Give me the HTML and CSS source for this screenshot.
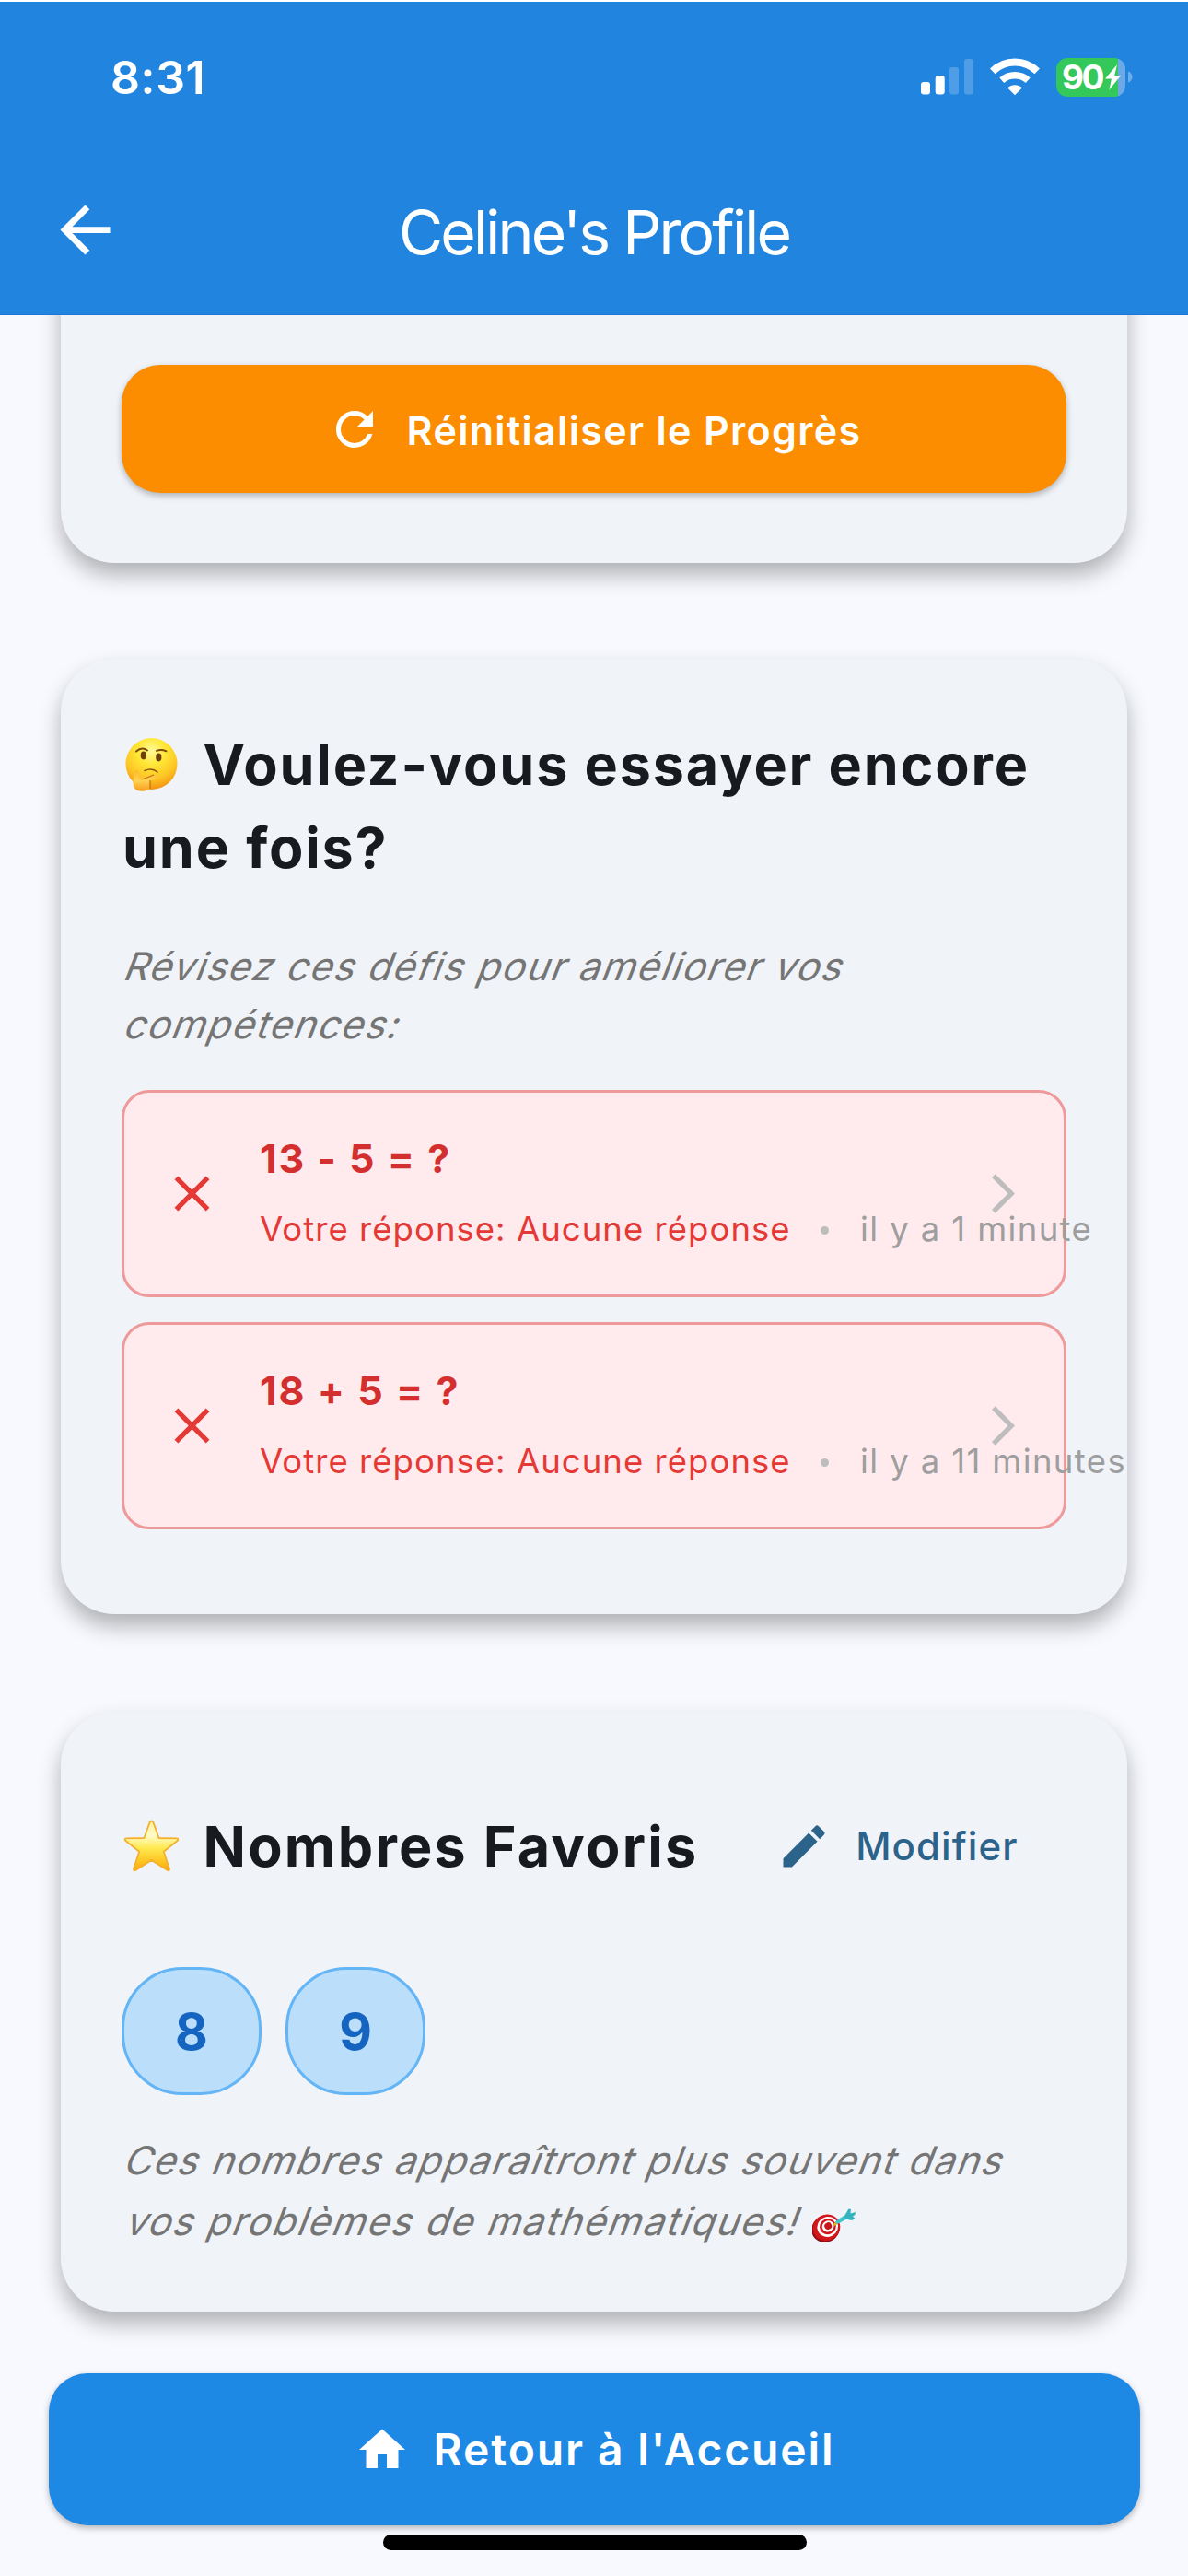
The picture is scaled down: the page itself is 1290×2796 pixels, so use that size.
FILE: index.html
```
<!DOCTYPE html>
<html lang="fr">
<head>
<meta charset="utf-8">
<title>Celine's Profile</title>
<link rel="stylesheet" href="styles.css">
</head>
<body>
<header class="header">
  <div class="status">
    <span class="clock">8:31</span>
    <div class="indicators">
      <svg width="57" height="39" viewBox="0 0 57 39" fill="#fff"><rect x="0" y="25" width="10" height="13.5" rx="3"/><rect x="15.7" y="18" width="10" height="20.500" rx="3"/><g opacity=".2"><rect x="31" y="9" width="10" height="29.500" rx="3"/><rect x="47" y="0" width="10" height="38.500" rx="3"/></g></svg>
      <svg width="54" height="41" viewBox="0 0 54 41" fill="none"><path d="M2.800 14.300C16.500 1.200 37.500 1.200 51.200 14.300" stroke="#fff" stroke-width="8"/><path d="M12.800 24.200C21 17 33 17 41.200 24.200" stroke="#fff" stroke-width="7.500"/><path d="M19 32.200c4.600-4 11.400-4 16 0L27 40.200z" fill="#fff"/></svg>
      <div class="battery">
        <div class="battery-body"><span class="battery-level">90</span><svg class="bolt" width="17" height="28" viewBox="0 0 17 28"><path d="M13 .3 0 15.600h7L4.300 27.800 17 12h-6.800z" fill="#fff"/></svg></div>
        <svg width="5" height="13" viewBox="0 0 5 13"><path d="M0 .5C6 2.500 6 10.500 0 12.500z" fill="#fff" opacity=".35"/></svg>
      </div>
    </div>
  </div>
  <div class="appbar">
    <svg class="back" width="81" height="81" viewBox="0 0 24 24" fill="#fff"><path d="M20 11H7.830l5.590-5.590L12 4l-8 8 8 8 1.410-1.410L7.830 13H20z"/></svg>
    <h1 class="title">Celine's Profile</h1>
  </div>
</header>

<main class="content">
  <section class="card card-progress">
    <button class="btn btn-reset">
      <svg width="60" height="60" viewBox="0 0 24 24" fill="#fff"><path d="M17.650 6.350A7.958 7.958 0 0 0 12 4a8 8 0 1 0 7.730 10h-2.080A5.990 5.990 0 0 1 12 18a6 6 0 1 1 0-12c1.660 0 3.140.69 4.220 1.780L13 11h7V4z"/></svg>
      <span>Réinitialiser le Progrès</span>
    </button>
  </section>

  <section class="card card-retry">
    <h2 class="heading"><svg class="emoji-think" role="img" aria-label="🤔" width="57" height="58" viewBox="0 0 57 58">
        <defs>
          <radialGradient id="face" cx=".5" cy=".25" r=".78"><stop offset="0" stop-color="#fffa9c"/><stop offset=".35" stop-color="#ffe735"/><stop offset=".7" stop-color="#fdc423"/><stop offset="1" stop-color="#f18a10"/></radialGradient>
          <linearGradient id="hand" x1="0" y1="0" x2="0" y2="1"><stop offset="0" stop-color="#fdb92c"/><stop offset=".5" stop-color="#ffd352"/><stop offset="1" stop-color="#f79b1e"/></linearGradient>
        </defs>
        <circle cx="28.500" cy="28" r="28" fill="url(#face)"/>
        <path d="M12 14.500q6-5.500 12-1M34 14q5-2 10.500.3" fill="none" stroke="#7d4a0c" stroke-width="2" stroke-linecap="round"/>
        <ellipse cx="19.800" cy="19" rx="3.100" ry="4.400" fill="#6d3f0a"/><ellipse cx="36.300" cy="21" rx="3.100" ry="4.400" fill="#6d3f0a"/>
        <path d="M21 35.500q8-3.500 14 1.500" fill="none" stroke="#8a560f" stroke-width="1.600" stroke-linecap="round"/>
        <path d="M10 37c2-3.500 5-1.500 5 1.500l.5 6c5-1.500 12-5 16-5 4.500 0 3.500 4-1 5.500-3 1-4 1.500-3.500 3.500 1 5-2 9-8 9.300-7 .2-10.500-3-10.500-9 0-4 .5-8 1.500-11.800z" fill="url(#hand)"/>
        <path d="M27 46v9M17 45c5-1 10-3.500 14-5" fill="none" stroke="#c86f10" stroke-width="1.200"/>
      </svg>Voulez-vous essayer encore<br>une fois?</h2>
    <p class="note note-retry"><span class="slant">Révisez ces défis pour améliorer vos</span><span class="slant">compétences:</span></p>
    <ul class="challenges">
      <li class="challenge">
        <svg width="65" height="65" viewBox="0 0 24 24" fill="#e53935"><path d="M19 6.410 17.590 5 12 10.590 6.410 5 5 6.410 10.590 12 5 17.590 6.410 19 12 13.410 17.590 19 19 17.590 13.410 12z"/></svg>
        <div class="challenge-body">
          <div class="question">13 - 5 = ?</div>
          <div class="meta"><span class="answer">Votre réponse: Aucune réponse</span><i class="dot"></i><span class="time">il y a 1 minute</span></div>
        </div>
        <svg width="25" height="43" viewBox="6.230 2 11.770 20" fill="#bdbdbd"><path d="M6.230 20.230 8 22l10-10L8 2 6.230 3.770 14.460 12z"/></svg>
      </li>
      <li class="challenge">
        <svg width="65" height="65" viewBox="0 0 24 24" fill="#e53935"><path d="M19 6.410 17.590 5 12 10.590 6.410 5 5 6.410 10.590 12 5 17.590 6.410 19 12 13.410 17.590 19 19 17.590 13.410 12z"/></svg>
        <div class="challenge-body">
          <div class="question">18 + 5 = ?</div>
          <div class="meta"><span class="answer">Votre réponse: Aucune réponse</span><i class="dot"></i><span class="time">il y a 11 minutes</span></div>
        </div>
        <svg width="25" height="43" viewBox="6.230 2 11.770 20" fill="#bdbdbd"><path d="M6.230 20.230 8 22l10-10L8 2 6.230 3.770 14.460 12z"/></svg>
      </li>
    </ul>
  </section>

  <section class="card card-favorites">
    <div class="favorites-head">
      <h2 class="heading heading-fav"><svg class="emoji-star" role="img" aria-label="⭐" width="61" height="57" viewBox="0 0 61 55" preserveAspectRatio="none">
          <defs><linearGradient id="star" x1="0" y1="0" x2="0" y2="1"><stop offset="0" stop-color="#fff3a8"/><stop offset=".3" stop-color="#fffbc4"/><stop offset=".55" stop-color="#ffe94f"/><stop offset=".85" stop-color="#fdc01c"/><stop offset="1" stop-color="#f7a51b"/></linearGradient></defs>
          <path d="M30.500 1.500Q32 1.500 33 4.500l5.500 14.800 19.500.3q2.500.4.5 2.600L43.800 33.500l6.200 18.200q.2 2.300-2.200 1.300L30.500 42.300 13.200 53q-2.400 1-2.200-1.300l6.200-18.200L2.500 22.200q-2-2.200.5-2.600l19.500-.3L28 4.500q1-3 2.500-3z" fill="url(#star)" stroke="#f5b02e" stroke-width="1.800" stroke-linejoin="round"/>
        </svg>Nombres Favoris</h2>
      <a class="edit">
        <svg width="60" height="60" viewBox="0 0 24 24" fill="#2b638b"><path d="M3 17.250V21h3.750L17.810 9.940l-3.750-3.750zM20.710 7.040a1 1 0 0 0 0-1.410l-2.340-2.340a1 1 0 0 0-1.410 0l-1.830 1.830 3.750 3.750z"/></svg>
        <span>Modifier</span>
      </a>
    </div>
    <div class="chips"><span class="chip">8</span><span class="chip">9</span></div>
    <p class="note note-fav"><span class="slant">Ces nombres apparaîtront plus souvent dans</span><span class="last-line"><span class="slant">vos problèmes de mathématiques!</span><svg class="emoji-dart" role="img" aria-label="🎯" width="47" height="37" viewBox="0 0 47 37">
          <g transform="rotate(-25 15 21)"><ellipse cx="14" cy="22" rx="15.500" ry="14.300" fill="#8e0f14"/><ellipse cx="15.500" cy="21" rx="15" ry="14" fill="#d3161c"/><ellipse cx="17" cy="20.800" rx="11.500" ry="10.800" fill="#fff"/><ellipse cx="17.300" cy="20.600" rx="9" ry="8.500" fill="#d3161c"/><ellipse cx="17.600" cy="20.400" rx="6.500" ry="6" fill="#fff"/><ellipse cx="17.800" cy="20.200" rx="4" ry="3.800" fill="#c9151b"/></g>
          <path d="M22 17.500l4-3 1.500 2.500-3.500 2z" fill="#e8b21d"/>
          <path d="M25 14.500c4-3.500 8-6 12.500-7.500l1.500 3c-4 3-8 5.500-12.500 7z" fill="#3fc6cf"/><path d="M34.500 9l5-8.500 2.500.5-.5 4.500L47 4l-.5 3-2.500 1.500L46.500 11l-3.500 2-7-1.500z" fill="#35b4be"/>
        </svg></span></p>
  </section>

  <button class="btn btn-home">
    <svg width="60" height="60" viewBox="0 0 24 24" fill="#fff"><path d="M10 20v-6h4v6h5v-8h3L12 3 2 12h3v8z"/></svg>
    <span>Retour à l'Accueil</span>
  </button>
</main>
<div class="home-indicator"></div>
</body>
</html>
```
FILE: styles.css
```
* { box-sizing: border-box; }
html { background: #f8f9fe; }
body {
  margin: 0;
  padding-top: 2px;
  width: 1290px;
  height: 2796px;
  overflow: hidden;
  display: flex;
  flex-direction: column;
  background: linear-gradient(#fff 2px, #f8f9fe 2px);
  font-family: Inter, "Liberation Sans", sans-serif;
}
svg { display: block; flex: none; }
h1, h2, p, ul { margin: 0; padding: 0; list-style: none; }

.header {
  position: relative;
  z-index: 1;
  flex: none;
  height: 340px;
  background: #2185e0;
  border-bottom: 1px solid #1879d4;
  color: #fff;
}
.status {
  height: 164px;
  padding: 0 60px 0 120px;
  display: flex;
  align-items: center;
  justify-content: space-between;
}
.clock { font-size: 50px; font-weight: 600; letter-spacing: .6px; line-height: 60px; }
.indicators { display: flex; align-items: center; gap: 18px; padding-bottom: 1px; }
.battery { display: flex; align-items: center; gap: 3px; }
.battery-body {
  width: 75px;
  height: 42px;
  border-radius: 12px;
  background: linear-gradient(90deg, #34c759 67px, #6ca9e8 67px);
  display: flex;
  align-items: center;
  padding-left: 6px;
}
.battery-level { width: 47px; font-size: 37px; font-weight: 700; letter-spacing: -2.5px; line-height: 42px; white-space: nowrap; }
.appbar {
  height: 171px;
  padding: 0 52px;
  display: grid;
  grid-template-columns: 1fr auto 1fr;
  align-items: center;
}
.back { margin-bottom: 4px; }
.title { font-size: 66px; font-weight: 400; letter-spacing: -2.78px; line-height: 80px; }

.content { display: flex; flex-direction: column; }
.card {
  margin: 0 66px;
  padding: 0 66px;
  border-radius: 58px;
  background: #f0f3f8;
  box-shadow: 0 13px 23px rgba(0, 0, 0, .29);
}
/* The first card is scrolled partly under the header. */
.card-progress { margin-top: -100px; height: 369px; padding-top: 154px; }
.btn {
  display: flex;
  align-items: center;
  justify-content: center;
  border: 0;
  padding: 0;
  color: #fff;
  font-family: inherit;
  font-weight: 600;
  white-space: nowrap;
}
.btn-reset {
  width: 100%;
  height: 139px;
  gap: 27px;
  border-radius: 42px;
  background: #fd8d00;
  box-shadow: 0 3px 7px rgba(0, 0, 0, .28);
  font-size: 43px;
  letter-spacing: 1.33px;
}
.btn-reset span { padding-top: 2px; }

.card-retry { margin-top: 104px; height: 1037px; padding-top: 70px; }
.heading { font-size: 61px; font-weight: 700; letter-spacing: 1.85px; line-height: 90px; color: #171b20; white-space: nowrap; padding-left: 1px; }
.heading svg { display: inline-block; }
.emoji-think { margin: 0 28px 0 2.5px; vertical-align: -7px; }
.note { font-size: 42px; color: #757575; white-space: nowrap; }
.slant { display: block; transform: skewX(-21deg); }
.note-retry { margin-top: 52px; line-height: 63px; letter-spacing: 1.45px; }
.note-retry .slant { transform-origin: 0 47px; }

.challenges { margin-top: 39.5px; display: flex; flex-direction: column; gap: 27px; }
.challenge {
  height: 225px;
  display: flex;
  align-items: center;
  padding: 0 53.500px 0 41px;
  border: 3px solid #ef9a9a;
  border-radius: 30px;
  background: #ffebee;
}
.challenge-body { flex: 1; min-width: 0; margin-left: 41px; white-space: nowrap; display: flex; flex-direction: column; gap: 17px; }
.question { font-size: 43px; font-weight: 700; letter-spacing: 2.05px; line-height: 60px; color: #d32f2f; }
.meta { display: flex; align-items: center; font-size: 36.500px; line-height: 60px; }
.answer { color: #e53935; letter-spacing: 1.04px; }
.dot { flex: none; width: 9px; height: 9px; margin: 4px 34px 0 32.500px; border-radius: 50%; background: #bdbdbd; }
.time { color: #9e9e9e; letter-spacing: 1.38px; }

.card-favorites { margin-top: 106px; height: 651px; padding-top: 66px; }
.favorites-head { height: 159px; display: flex; align-items: center; justify-content: space-between; }
.heading-fav { letter-spacing: 2.23px; }
.emoji-star { margin: 0 26px 0 0.5px; vertical-align: -6px; }
.edit { display: flex; align-items: center; gap: 26px; margin-right: 52.5px; color: #2b638b; font-size: 42px; font-weight: 500; letter-spacing: 1.06px; }
.chips { margin-top: 52px; display: flex; gap: 26px; }
.chip {
  width: 152px;
  height: 139px;
  display: flex;
  align-items: center;
  justify-content: center;
  border: 3px solid #64b5f6;
  border-radius: 66px;
  background: #bbdefb;
  color: #1565c0;
  font-size: 55px;
  font-weight: 700;
}
.note-fav { margin-top: 38px; line-height: 66px; letter-spacing: 1.56px; }
.note-fav .slant { transform-origin: 0 48px; }
.last-line { display: flex; align-items: center; padding-left: 2px; }
.emoji-dart { margin: 8px 0 0 17px; }

.btn-home {
  margin: 67px 52px 0 53px;
  height: 165px;
  gap: 26px;
  border-radius: 42px;
  background: #1e88e5;
  box-shadow: 0 3px 7px rgba(0, 0, 0, .28);
  font-size: 48px;
  letter-spacing: 1.86px;
}
.btn-home span { padding-bottom: 1px; }
.home-indicator { width: 460px; height: 17px; margin: 10px 0 0 416px; border-radius: 9px; background: #000; }
```
